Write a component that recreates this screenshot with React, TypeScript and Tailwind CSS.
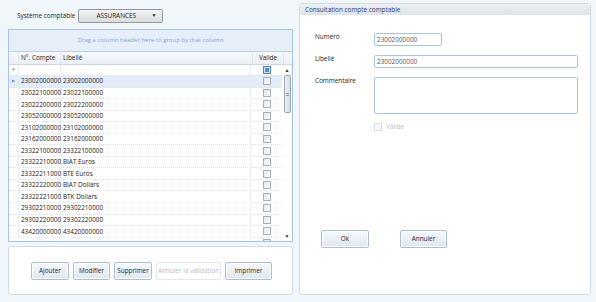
import React from "react";

const rows: [string, string][] = [
  ["23002000000", "23002000000"],
  ["23022100000", "23022100000"],
  ["23022200000", "23022200000"],
  ["23052000000", "23052000000"],
  ["23102000000", "23102000000"],
  ["23162000000", "23162000000"],
  ["23322100000", "23322100000"],
  ["23322210000", "BIAT Euros"],
  ["23322211000", "BTE Euros"],
  ["23322220000", "BIAT Dollars"],
  ["23322221000", "BTK Dollars"],
  ["29302210000", "29302210000"],
  ["29302220000", "29302220000"],
  ["43420000000", "43420000000"],
  ["", ""],
];

function Check({ blue = false, faded = false }: { blue?: boolean; faded?: boolean }) {
  return (
    <span
      className={
        "inline-block h-[8px] w-[8px] border " +
        (blue
          ? "border-[#5b7fae] bg-[#4f8fd6] shadow-[inset_0_0_0_1px_#cfe2f7]"
          : faded
          ? "border-[#d8dde4] bg-[#f6f7f9]"
          : "border-[#a7aeb8] bg-gradient-to-br from-[#e4e7eb] to-[#fbfbfc]")
      }
    />
  );
}

function Btn({ label, w, disabled = false }: { label: string; w: string; disabled?: boolean }) {
  return (
    <div
      className={
        "flex h-[18px] items-center justify-center whitespace-nowrap rounded-[2px] border text-[6.4px] " +
        w +
        (disabled
          ? " border-[#e3e8ee] bg-white text-[#b7bcc3]"
          : " border-[#a9bfd8] bg-gradient-to-b from-[#f7f9fc] to-[#dfe7f1] text-[#1e1e1e] shadow-[inset_0_0_0_1px_#ffffff]")
      }
    >
      {label}
    </div>
  );
}

export default function App() {
  return (
    <div
      className="flex h-[302px] w-[596px] overflow-hidden bg-[#f1f6fb] text-[#222]"
      style={{ fontFamily: '"Open Sans", "Noto Sans", "Liberation Sans", sans-serif' }}
    >
      {/* Left: list of accounts */}
      <div className="ml-[8px] flex w-[285px] flex-col">
        <div className="flex h-[29px] items-start pl-[9px] pt-[9px]">
          <span className="mt-[2px] text-[6.4px]">Système comptable</span>
          <div className="ml-[3px] flex h-[14px] w-[85px] items-center rounded-[2px] border border-[#8d99a6] bg-gradient-to-b from-[#f4f4f4] to-[#dcdcdc] pl-[17px] pr-[6px] text-[6.4px]">
            <span className="flex-1">ASSURANCES</span>
            <span className="text-[5px]">▼</span>
          </div>
        </div>

        {/* Grid */}
        <div className="flex h-[213px] flex-col overflow-hidden border border-[#a9c4e2] bg-white text-[6.4px]">
          <div className="flex h-[22px] shrink-0 items-center justify-center border-b border-[#b9cfe8] bg-[#e6eff9] text-[6px] text-[#8aa5c8]">
            Drag a column header here to group by that column
          </div>
          <div className="flex h-[13px] shrink-0 items-center border-b border-[#c9d7e6] bg-gradient-to-b from-[#f8fafc] to-[#e9eff5]">
            <div className="h-full w-[10px] border-r border-[#dfe6ee]" />
            <div className="flex h-full w-[42px] items-center border-r border-[#dfe6ee] pl-[2px]">N°. Compte</div>
            <div className="flex h-full w-[192px] items-center border-r border-[#dfe6ee] pl-[2px]">Libellé</div>
            <div className="flex h-full w-[31px] items-center justify-center border-r border-[#dfe6ee]">Valide</div>
            <div className="flex-1" />
          </div>
          <div className="flex min-h-0 flex-1">
            <div className="flex min-w-0 flex-1 flex-col">
              <div className="flex h-[11px] shrink-0 items-center border-b border-[#e1e9f2]">
                <div className="flex h-full w-[10px] items-center justify-center border-r border-[#e6ecf2] text-[5px] text-[#6f8fb6]">▾</div>
                <div className="h-full w-[42px] border-r border-[#e6ecf2]" />
                <div className="h-full w-[192px] border-r border-[#e6ecf2]" />
                <div className="flex h-full w-[31px] items-center justify-center">
                  <Check blue />
                </div>
              </div>
              {rows.map(([code, label], i) => (
                <div
                  key={i}
                  className={
                    "flex h-[11.55px] shrink-0 items-center border-b border-dotted border-[#d6e3f1] " +
                    (i === 0 ? "bg-[#e2edf9]" : "")
                  }
                >
                  <div className="flex h-full w-[10px] items-center justify-center border-r border-[#e6ecf2] text-[4px] text-[#6f8fb6]">
                    {i === 0 ? "▶" : ""}
                  </div>
                  <div className="flex h-full w-[42px] items-center border-r border-[#e6ecf2] pl-[2px]">{code}</div>
                  <div className="flex h-full w-[192px] items-center border-r border-[#e6ecf2] pl-[2px]">{label}</div>
                  <div className="flex h-full w-[31px] items-center justify-center">
                    <Check />
                  </div>
                </div>
              ))}
            </div>
            {/* Scrollbar */}
            <div className="flex w-[10px] flex-col items-center bg-white pt-[2px]">
              <span className="text-[5px] leading-[6px] text-[#333]">▲</span>
              <div className="mt-[2px] flex h-[38px] w-[7px] items-center justify-center rounded-[2px] border border-[#9aa7b6] bg-gradient-to-r from-[#eef1f4] to-[#d6dde5]">
                <span className="h-[3px] w-[3px] border-y border-[#8895a4]" />
              </div>
              <div className="flex-1" />
              <span className="mb-[2px] text-[5px] leading-[6px] text-[#333]">▼</span>
            </div>
          </div>
        </div>

        {/* Action buttons */}
        <div className="mt-[4px] flex h-[49px] items-center justify-center gap-[4px] rounded-[3px] border border-[#d3dce6] bg-white pl-[2px]">
          <Btn label="Ajouter" w="w-[38px]" />
          <Btn label="Modifier" w="w-[37px]" />
          <Btn label="Supprimer" w="w-[38px]" />
          <Btn label="Annuler la validation" w="w-[65px]" disabled />
          <Btn label="Imprimer" w="w-[47px]" />
        </div>
      </div>

      {/* Right: detail panel */}
      <div className="ml-[6px] mt-[3px] flex h-[292px] w-[292px] flex-col overflow-hidden rounded-[3px] border border-[#d3dce6] bg-white">
        <div className="flex h-[11px] shrink-0 items-center bg-gradient-to-b from-[#eef1f5] to-[#dde3ea] pl-[5px] text-[6.4px] text-[#1f3e6e]">
          Consultation compte comptable
        </div>
        <div className="flex flex-col pl-[15px] pt-[18px] text-[6.4px]">
          <div className="flex items-start">
            <span className="-mt-[1px] w-[59px]">Numéro</span>
            <div className="flex h-[13px] w-[68px] items-center rounded-[2px] border border-[#a9c2de] pl-[2px] text-[#555]">
              23002000000
            </div>
          </div>
          <div className="mt-[9px] flex items-start">
            <span className="-mt-[1px] w-[59px]">Libellé</span>
            <div className="flex h-[13px] w-[204px] items-center rounded-[2px] border border-[#a9c2de] pl-[2px] text-[#555]">
              23002000000
            </div>
          </div>
          <div className="mt-[9px] flex items-start">
            <span className="-mt-[1px] w-[59px]">Commentaire</span>
            <div className="h-[37px] w-[204px] rounded-[2px] border border-[#a9c2de]" />
          </div>
          <div className="ml-[59px] mt-[8px] flex items-center gap-[4px] text-[#b9bec5]">
            <Check faded />
            <span>Valide</span>
          </div>
        </div>
        <div className="ml-[21px] mt-[98px] flex gap-[31px]">
          <Btn label="Ok" w="w-[48px]" />
          <Btn label="Annuler" w="w-[47px]" />
        </div>
      </div>
    </div>
  );
}
